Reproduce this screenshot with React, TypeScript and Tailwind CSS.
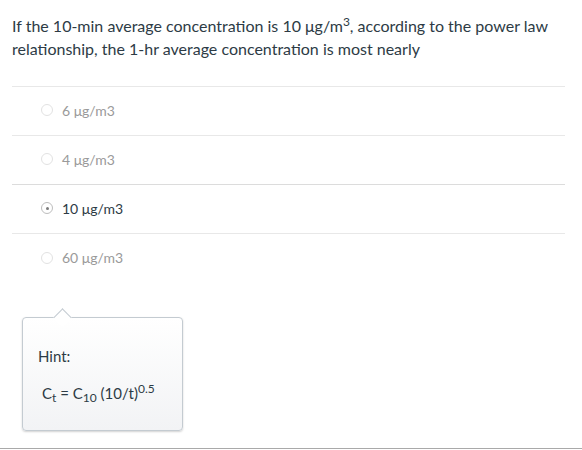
import React, { useState } from 'react';

const options = ['6 μg/m3', '4 μg/m3', '10 μg/m3', '60 μg/m3'];

export default function App() {
  const [selected, setSelected] = useState(2);

  return (
    <div className="w-[582px] h-[450px] bg-white text-[#2d3b45] font-['Lato','Liberation_Sans',sans-serif] flex flex-col">
      <div className="pl-3 pr-[17px] pt-[14px]">
        {/* Question */}
        <p className="text-[16px] leading-[23px]">
          If the 10-min average concentration is 10 μg/m<span className="align-[6px] text-[12px] leading-none">3</span>, according to the power law relationship, the 1-hr average concentration is most nearly
        </p>

        {/* Answers */}
        <div className="mt-[26px] border-t border-[#e8e8e8]">
          {options.map((o, i) => (
            <label
              key={o}
              onClick={() => setSelected(i)}
              className={
                'flex items-center gap-[9px] h-[49px] pl-[29px] pb-[2px] cursor-pointer ' +
                (i < options.length - 1 ? (i === 1 ? 'border-b border-[#dcdcdc]' : 'border-b border-[#e8e8e8]') : '')
              }
            >
              <span
                className={
                  'w-[12px] h-[12px] rounded-full border flex items-center justify-center ' +
                  (i === selected ? 'border-[#bdbdbd]' : 'border-[#e2e2e2]')
                }
              >
                {i === selected && <span className="w-[3px] h-[3px] rounded-full bg-[#7a7a7a]" />}
              </span>
              <span className={'text-[14px] ' + (i === selected ? 'text-[#2d3b45]' : 'text-[#9a9a9a]')}>
                {o}
              </span>
            </label>
          ))}
        </div>

        {/* Hint popover */}
        <div className="relative mt-[34px] ml-[10px] w-[161px] h-[114px] rounded-[4px] border border-[#c4cbd1] bg-gradient-to-b from-white to-[#f2f3f5] shadow-[0_1px_2px_rgba(0,0,0,0.18)] pl-[15px] pt-[27px]">
          <div className="absolute -top-[7px] left-[33px] w-[13px] h-[13px] rotate-45 bg-white border-l border-t border-[#c4cbd1]" />
          <p className="text-[15px] leading-[22px]">Hint:</p>
          <p className="mt-[15px] pl-[4px] text-[15px] leading-[22px] whitespace-nowrap">
            C<span className="align-[-3px] text-[12px] leading-none">t</span> = C<span className="align-[-3px] text-[12px] leading-none">10</span> (10/t)<span className="align-[6px] text-[12px] leading-none">0.5</span>
          </p>
        </div>
      </div>

      <div className="mt-auto mb-[1px] h-px bg-[#a9a9a9]" />
    </div>
  );
}
